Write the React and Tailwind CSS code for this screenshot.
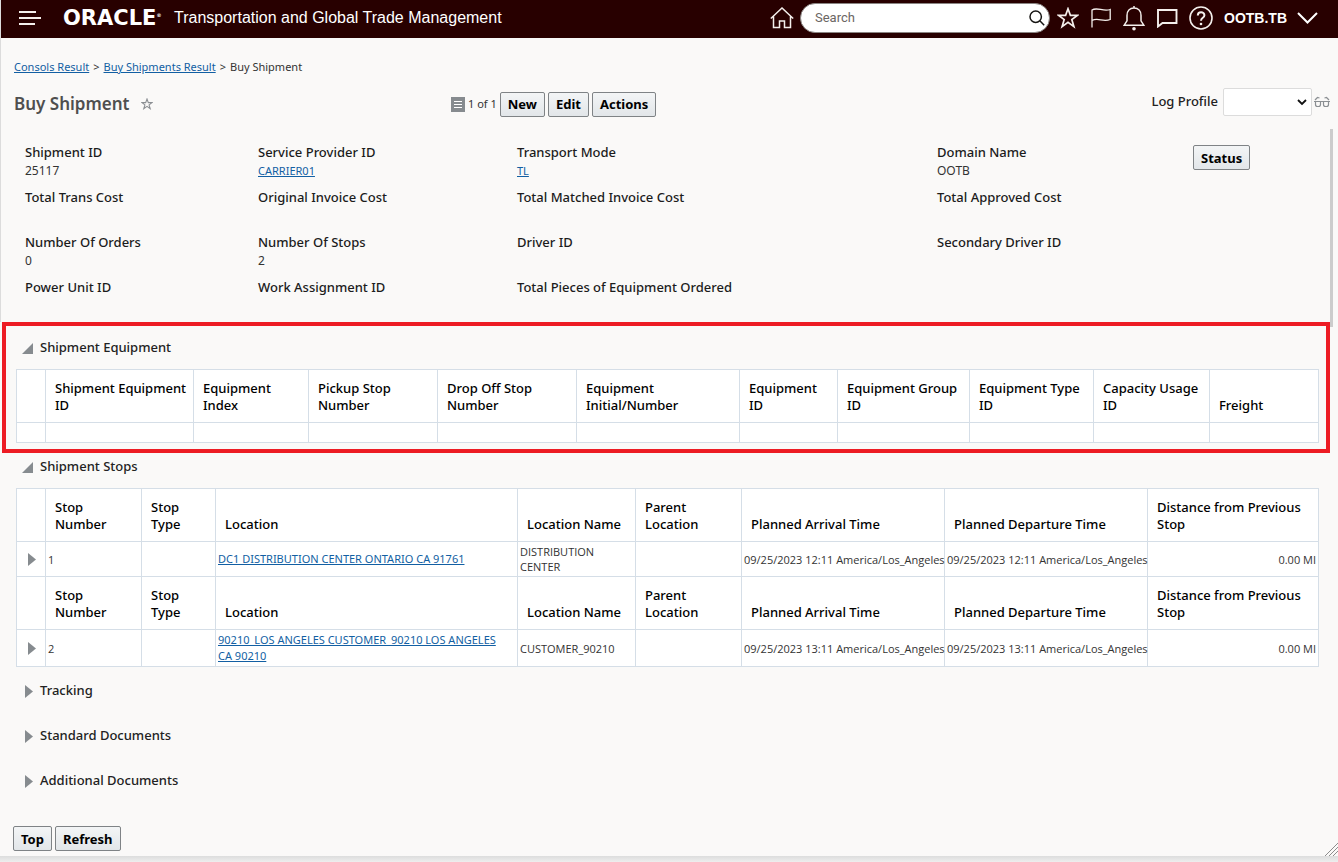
import React from 'react';

const fields = [
  [['Shipment ID', '25117'], ['Service Provider ID', 'CARRIER01', true], ['Transport Mode', 'TL', true], ['Domain Name', 'OOTB']],
  [['Total Trans Cost'], ['Original Invoice Cost'], ['Total Matched Invoice Cost'], ['Total Approved Cost']],
  [['Number Of Orders', '0'], ['Number Of Stops', '2'], ['Driver ID'], ['Secondary Driver ID']],
  [['Power Unit ID'], ['Work Assignment ID'], ['Total Pieces of Equipment Ordered']],
];

const equipmentColumns = [
  'Shipment Equipment ID', 'Equipment Index', 'Pickup Stop Number', 'Drop Off Stop Number', 'Equipment Initial/Number',
  'Equipment ID', 'Equipment Group ID', 'Equipment Type ID', 'Capacity Usage ID', 'Freight',
];

const stopColumns = [
  'Stop Number', 'Stop Type', 'Location', 'Location Name', 'Parent Location',
  'Planned Arrival Time', 'Planned Departure Time', 'Distance from Previous Stop',
];

const stops = [
  { number: '1', location: 'DC1 DISTRIBUTION CENTER ONTARIO CA 91761', name: 'DISTRIBUTION CENTER', time: '09/25/2023 12:11 America/Los_Angeles', height: 'h-[35px]' },
  { number: '2', location: '90210_LOS ANGELES CUSTOMER_90210 LOS ANGELES CA 90210', name: 'CUSTOMER_90210', time: '09/25/2023 13:11 America/Los_Angeles', height: 'h-[37px]' },
];

function Button({ children }) {
  return (
    <button type="button" className="h-[25px] rounded-[2px] border border-[#7f8386] bg-linear-to-b from-[#f3f5f6] to-[#e2e6e9] px-[7px] text-[13px] leading-5 font-bold text-black">
      {children}
    </button>
  );
}

function IconButton({ label, children }) {
  return (
    <button type="button" aria-label={label} className="flex shrink-0 items-center justify-center text-[#f4efec]">
      {children}
    </button>
  );
}

function Collapsed() {
  return (
    <svg width="8" height="13" viewBox="0 0 8 13" fill="#868b8f" aria-hidden="true"><path d="M0 0L8 6.5L0 13Z" /></svg>
  );
}

function Expanded() {
  return (
    <svg width="11" height="11" viewBox="0 0 11 11" fill="#868b8f" aria-hidden="true"><path d="M11 0V11H0Z" /></svg>
  );
}

function SectionTitle({ open, children }) {
  return (
    <h2>
      <button type="button" aria-expanded={Boolean(open)} className="flex h-5 items-center gap-[7px] text-[13px] leading-5 font-medium text-[#222]">
        <span className="flex w-[11px] justify-end pt-[3px]">{open ? <Expanded /> : <Collapsed />}</span>
        {children}
      </button>
    </h2>
  );
}

function HeaderRow({ columns }) {
  return (
    <tr className="h-[53px]">
      <td className="border border-[#d5dee7]" />
      {columns.map((name) => (
        <th key={name} scope="col" className="border border-[#d5dee7] pt-[9px] pr-[6px] pb-2 pl-[9px] text-left align-bottom text-[13px] leading-[17px] font-medium text-black">
          {name}
        </th>
      ))}
    </tr>
  );
}

function Header() {
  return (
    <header className="flex h-[38px] items-center bg-[#280000] pr-5 pb-[3px] pl-[18px] font-['Liberation_Sans',sans-serif] text-white">
      <IconButton label="Menu">
        <svg width="22" height="16" viewBox="0 0 22 16" stroke="currentColor" strokeWidth="2"><path d="M0 2H17M0 8H22M0 14H16" /></svg>
      </IconButton>
      <span className="ml-[22px] flex w-[102px] shrink-0 items-center font-['DejaVu_Sans',sans-serif] text-[21px] leading-6 font-bold">
        ORACLE<sup className="text-[5px] leading-none">®</sup>
      </span>
      <h1 className="ml-[9px] text-[16px] leading-5 whitespace-nowrap">Transportation and Global Trade Management</h1>
      <div className="ml-auto flex items-center">
        <IconButton label="Home">
          <svg width="24" height="22" viewBox="0 0 24 22" fill="none" stroke="currentColor" strokeWidth="1.5"><path d="M.8 11.5L12 1L23.2 11.5M3.5 9.5V20.5H9.5V14H14.5V20.5H20.5V9.5" /></svg>
        </IconButton>
        <div className="ml-[6px] flex h-[30px] w-[250px] items-center rounded-full border border-[#8a8583] bg-white pr-1 pl-[14px]">
          <input aria-label="Search" placeholder="Search" className="min-w-0 flex-1 font-[Roboto,sans-serif] text-[13px] text-black outline-none placeholder:text-[#6b6663]" />
          <button type="button" aria-label="Run search" className="text-[#161513]">
            <svg width="16" height="16" viewBox="0 0 16 16" fill="none" stroke="currentColor" strokeWidth="1.5"><circle cx="6.7" cy="6.7" r="5.7" /><path d="M10.8 10.8L15.2 15.2" /></svg>
          </button>
        </div>
        <div className="ml-[7px] flex items-center gap-[11px]">
          <IconButton label="Favorites">
            <svg width="22" height="22" viewBox="0 0 22 22" fill="none" stroke="currentColor" strokeWidth="1.7"><path d="M11 1.8L13.4 8.4H20.4L14.8 12.6L16.9 19.6L11 15.4L5.1 19.6L7.2 12.6L1.6 8.4H8.6Z" /></svg>
          </IconButton>
          <IconButton label="Flags">
            <svg width="22" height="22" viewBox="0 0 22 22" fill="none" stroke="currentColor" strokeWidth="1.3"><path d="M2 20.5V3C7-.2 13 4.8 20.2 2.5V12.5C13 15.4 8 10.2 2 13.5" /></svg>
          </IconButton>
          <IconButton label="Notifications">
            <svg width="22" height="26" viewBox="0 0 22 26" fill="none" stroke="currentColor" strokeWidth="1.5"><path d="M1.2 20.2H20.8L18 15.8V10.5C18 6 15.2 3 11 3C6.8 3 4 6 4 10.5V15.8ZM11 3V1" /><circle cx="11" cy="23.8" r="1.8" fill="currentColor" stroke="none" /></svg>
          </IconButton>
          <IconButton label="Messages">
            <svg width="22" height="20" viewBox="0 0 22 20" fill="none" stroke="currentColor" strokeWidth="1.9"><path d="M2 2H20.5V15H6.5L2 18.5Z" /></svg>
          </IconButton>
          <IconButton label="Help">
            <svg width="24" height="24" viewBox="0 0 24 24" fill="none" stroke="currentColor" strokeWidth="1.6"><circle cx="12" cy="12" r="11" /><path d="M8.8 9.5C8.8 5 15.4 5.2 15.4 9.2C15.4 12 12 11.6 12 14.8" strokeWidth="2" /><circle cx="12" cy="18" r="1.3" fill="currentColor" stroke="none" /></svg>
          </IconButton>
          <button type="button" className="flex items-center gap-[10px] text-[14px] leading-5 font-bold">
            OOTB.TB
            <svg width="21" height="12" viewBox="0 0 21 12" fill="none" stroke="currentColor" strokeWidth="2"><path d="M1 1L10.5 10.5L20 1" /></svg>
          </button>
        </div>
      </div>
    </header>
  );
}

export default function App() {
  return (
    <div className="flex min-h-screen flex-col bg-[#faf9f8] font-['Noto_Sans',sans-serif] text-[12px] text-[#333]">
      <div className="border-l border-[#dcdcdc]">
        <Header />
        <nav aria-label="Breadcrumb" className="flex gap-1 pt-5 pl-[13px] text-[11px] leading-[18px]">
          <a href="#consols" className="text-[#125fa3] underline">Consols Result</a>
          <span>&gt;</span>
          <a href="#buy-shipments" className="text-[#125fa3] underline">Buy Shipments Result</a>
          <span>&gt;</span>
          <span>Buy Shipment</span>
        </nav>
        <div className="mt-[2px] grid h-[52px] grid-cols-[437px_1fr_auto] items-center pr-2 pl-[13px]">
          <div className="flex items-center gap-3">
            <h2 className="text-[17px] leading-6 font-semibold text-[#4f4f4f]">Buy Shipment</h2>
            <button type="button" aria-label="Add to favorites" className="text-[#8b8f93]">
              <svg width="12" height="12" viewBox="0 0 22 22" fill="none" stroke="currentColor" strokeWidth="2"><path d="M11 1.8L13.4 8.4H20.4L14.8 12.6L16.9 19.6L11 15.4L5.1 19.6L7.2 12.6L1.6 8.4H8.6Z" /></svg>
            </button>
          </div>
          <div className="flex items-center gap-[3px]">
            <svg width="14" height="15" viewBox="0 0 14 15" aria-hidden="true"><path fill="#868b8f" d="M0 0H14V15H0Z" /><path stroke="#fff" d="M3 4.5H11M3 7.5H11M3 10.5H11" /></svg>
            <span className="text-[11px]">1 of 1</span>
            <Button>New</Button>
            <Button>Edit</Button>
            <Button>Actions</Button>
          </div>
          <div className="flex items-center pb-1">
            <label htmlFor="log-profile" className="mr-[5px] text-[13px] font-medium text-[#222]">Log Profile</label>
            <div className="grid items-center">
              <select id="log-profile" className="col-start-1 row-start-1 h-7 w-[89px] appearance-none rounded-[2px] border border-[#dcdcdc] bg-white" />
              <svg className="pointer-events-none col-start-1 row-start-1 mr-[5px] justify-self-end" width="10" height="7" viewBox="0 0 10 7" fill="none" stroke="#111" strokeWidth="1.8"><path d="M1 1L5 5L9 1" /></svg>
            </div>
            <button type="button" aria-label="View log" className="ml-[2px] text-[#8b8f93]">
              <svg width="16" height="12" viewBox="0 0 16 12" fill="none" stroke="currentColor" strokeWidth="1.2"><path d="M0 5.5H16M1.5 5.5V8.5Q1.5 10.5 3.5 10.5H4.5Q6.5 10.5 6.5 8.5V5.5M9.5 5.5V8.5Q9.5 10.5 11.5 10.5H12.5Q14.5 10.5 14.5 8.5V5.5M1 4L3.5 1.5L5.5 2M15 4L12.5 1.5L10.5 2" /></svg>
            </button>
          </div>
        </div>
        <section aria-label="Shipment details" className="-mt-px -mb-[5px] mr-[5px] flex h-[198px] border-r-[3px] border-[#ccc] pt-[13px] pl-6">
          <dl className="grid auto-rows-[45px] grid-cols-[233px_259px_420px_256px]">
            {fields.flat().map(([label, value, link]) => (
              <div key={label}>
                <dt className="text-[13px] leading-5 font-medium text-[#1c1c1c]">{label}</dt>
                <dd className="leading-[18px]">{link ? <a href="#detail" className="text-[11px] text-[#125fa3] underline">{value}</a> : value}</dd>
              </div>
            ))}
          </dl>
          <div className="pt-[3px]"><Button>Status</Button></div>
        </section>
      </div>

      <section className="mr-2 ml-[2px] border-4 border-[#ed1c24] pt-[11px] pr-[7px] pb-[6px] pl-[10px]">
        <div className="pl-[6px]"><SectionTitle open>Shipment Equipment</SectionTitle></div>
        <table className="mt-3 w-full table-fixed border-collapse bg-white">
          <colgroup>
            <col className="w-[29px]" /><col className="w-[148px]" /><col className="w-[115px]" /><col className="w-[129px]" />
            <col className="w-[139px]" /><col className="w-[163px]" /><col className="w-[98px]" /><col className="w-[132px]" />
            <col className="w-[124px]" /><col className="w-[116px]" /><col />
          </colgroup>
          <thead><HeaderRow columns={equipmentColumns} /></thead>
          <tbody>
            <tr className="h-5">
              <td className="border border-[#d5dee7]" />
              {equipmentColumns.map((name) => <td key={name} className="border border-[#d5dee7]" />)}
            </tr>
          </tbody>
        </table>
      </section>

      <section className="pt-[3px] pr-[19px] pl-4">
        <div className="pl-[6px]"><SectionTitle open>Shipment Stops</SectionTitle></div>
        <table className="mt-3 w-full table-fixed border-collapse bg-white">
          <colgroup>
            <col className="w-[29px]" /><col className="w-[96px]" /><col className="w-[74px]" /><col />
            <col className="w-[118px]" /><col className="w-[106px]" /><col className="w-[203px]" /><col className="w-[203px]" /><col className="w-[171px]" />
          </colgroup>
          {stops.map((stop) => (
            <tbody key={stop.number}>
              <HeaderRow columns={stopColumns} />
              <tr className={`${stop.height} font-['Open_Sans',sans-serif] text-[11px] leading-[15px] [&>td]:border [&>td]:border-[#d5dee7] [&>td]:pl-[2px]`}>
                <td>
                  <button type="button" aria-label={`Expand stop ${stop.number}`} className="ml-[9px] flex"><Collapsed /></button>
                </td>
                <td>{stop.number}</td>
                <td />
                <td className="pr-3 font-['Noto_Sans',sans-serif] leading-4"><a href="#location" className="text-[#125fa3] underline">{stop.location}</a></td>
                <td>{stop.name}</td>
                <td />
                <td className="whitespace-nowrap">{stop.time}</td>
                <td className="whitespace-nowrap">{stop.time}</td>
                <td className="pr-[2px] text-right">0.00 MI</td>
              </tr>
            </tbody>
          ))}
        </table>
        <div className="flex flex-col gap-[25px] pt-[13px] pl-[6px]">
          <SectionTitle>Tracking</SectionTitle>
          <SectionTitle>Standard Documents</SectionTitle>
          <SectionTitle>Additional Documents</SectionTitle>
        </div>
      </section>

      <footer className="mt-auto">
        <div className="flex items-end justify-between pl-[13px]">
          <div className="flex gap-[3px] pb-[5px]">
            <Button>Top</Button>
            <Button>Refresh</Button>
          </div>
          <svg width="13" height="13" viewBox="0 0 13 13" stroke="#8d8d8d" aria-hidden="true"><path d="M0 13L13 0M4 13L13 4M8 13L13 8" /></svg>
        </div>
        <div className="h-[6px] bg-linear-to-b from-[#dcdddd] to-[#eeeeee]" />
      </footer>
    </div>
  );
}
